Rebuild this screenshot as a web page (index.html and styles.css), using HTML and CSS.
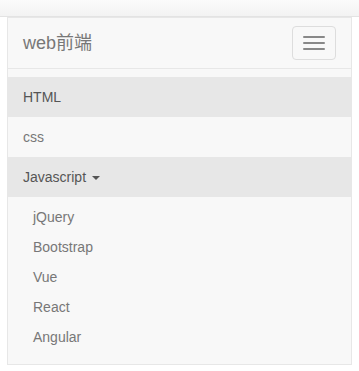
FILE: index.html
```html
<!DOCTYPE html>
<html lang="zh">
<head>
<meta charset="utf-8">
<link rel="stylesheet" href="styles.css">
</head>
<body>
<div class="topbar"></div>
<nav class="navbar">
  <div class="navbar-header">
    <a class="brand" href="#">web前端</a>
    <button class="toggle" type="button" aria-label="menu">
      <span class="bar"></span><span class="bar"></span><span class="bar"></span>
    </button>
  </div>
  <div class="collapse">
    <ul class="nav">
      <li class="active"><a href="#">HTML</a></li>
      <li><a href="#">css</a></li>
      <li class="open"><a href="#">Javascript <span class="caret"></span></a>
        <ul class="dropdown">
          <li><a href="#">jQuery</a></li>
          <li><a href="#">Bootstrap</a></li>
          <li><a href="#">Vue</a></li>
          <li><a href="#">React</a></li>
          <li><a href="#">Angular</a></li>
        </ul>
      </li>
    </ul>
  </div>
</nav>
</body>
</html>
```

FILE: styles.css
```css
* { box-sizing: border-box; }
html, body { margin: 0; padding: 0; background: #fff; }
body {
  font-family: "Liberation Sans", Arial, "Noto Sans CJK SC", sans-serif;
  font-size: 14px;
  line-height: 20px;
  color: #333;
}
a { text-decoration: none; }
.topbar {
  height: 17px;
  background: linear-gradient(#fbfbfb, #f3f3f3);
  border-bottom: 1px solid #e3e3e3;
}
.navbar {
  margin: 0 7px;
  background: #f8f8f8;
  border: 1px solid #e7e7e7;
}
.navbar-header {
  height: 50px;
  display: flex;
  justify-content: space-between;
  align-items: flex-start;
}
.brand {
  display: block;
  padding: 15px;
  height: 50px;
  font-size: 18px;
  line-height: 20px;
  color: #777;
}
.toggle {
  margin: 8px 15px 0 0;
  width: 44px;
  height: 34px;
  padding: 9px 10px;
  background: transparent;
  border: 1px solid #ddd;
  border-radius: 4px;
  display: flex;
  flex-direction: column;
  gap: 4px;
}
.bar {
  display: block;
  width: 22px;
  height: 2px;
  border-radius: 1px;
  background: #888;
}
.collapse {
  border-top: 1px solid #e7e7e7;
}
.nav {
  list-style: none;
  margin: 7.5px 0;
  padding: 0;
}
.nav > li > a {
  display: block;
  padding: 10px 15px;
  color: #777;
}
.nav > li.active > a,
.nav > li.open > a {
  background: #e7e7e7;
  color: #555;
}
.caret {
  display: inline-block;
  width: 0;
  height: 0;
  margin-left: 2px;
  vertical-align: middle;
  border-top: 4px solid;
  border-left: 4px solid transparent;
  border-right: 4px solid transparent;
}
.dropdown {
  list-style: none;
  margin: 0;
  padding: 5px 0;
}
.dropdown a {
  display: block;
  padding: 5px 15px 5px 25px;
  color: #777;
  line-height: 20px;
}
```
